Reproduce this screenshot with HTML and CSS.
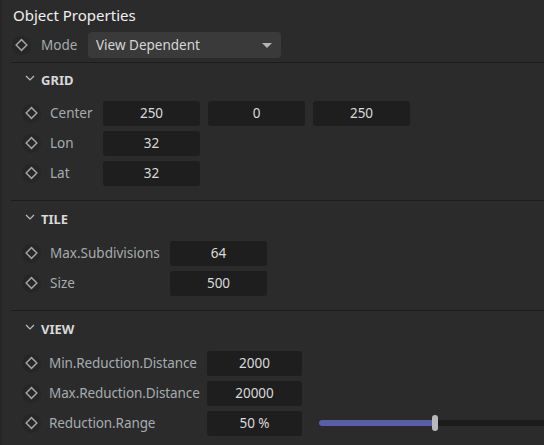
FILE: index.html
```html
<!DOCTYPE html>
<html>
<head>
<meta charset="utf-8">
<link rel="stylesheet" href="styles.css">
</head>
<body>
<div class="panel">
  <div class="title">Object Properties</div>
  <div class="mode-row">
    <span class="key"><svg viewBox="0 0 20 20" width="20" height="20"><rect x="6" y="6" width="8" height="8" transform="rotate(45 10 10)" fill="none" stroke="#a3a3a3" stroke-width="1.5"/></svg></span>
    <span class="label">Mode</span>
    <div class="dropdown"><span>View Dependent</span><svg class="caret" viewBox="0 0 10 6" width="10" height="6"><path d="M0 0 L10 0 L5 5 Z" fill="#b4b4b4"/></svg></div>
  </div>

  <section class="section first grid-sec">
    <div class="section-head"><svg class="chev" viewBox="0 0 10 6" width="10" height="6"><path d="M1 1 L5 5 L9 1" fill="none" stroke="#bcbcbc" stroke-width="1.2"/></svg><span>GRID</span></div>
    <div class="rows">
      <span class="key"><svg viewBox="0 0 20 20" width="20" height="20"><rect x="6" y="6" width="8" height="8" transform="rotate(45 10 10)" fill="none" stroke="#a3a3a3" stroke-width="1.5"/></svg></span>
      <span class="label">Center</span>
      <div class="values"><div class="field">250</div><div class="field">0</div><div class="field">250</div></div>

      <span class="key"><svg viewBox="0 0 20 20" width="20" height="20"><rect x="6" y="6" width="8" height="8" transform="rotate(45 10 10)" fill="none" stroke="#a3a3a3" stroke-width="1.5"/></svg></span>
      <span class="label">Lon</span>
      <div class="values"><div class="field">32</div></div>

      <span class="key"><svg viewBox="0 0 20 20" width="20" height="20"><rect x="6" y="6" width="8" height="8" transform="rotate(45 10 10)" fill="none" stroke="#a3a3a3" stroke-width="1.5"/></svg></span>
      <span class="label">Lat</span>
      <div class="values"><div class="field">32</div></div>
    </div>
  </section>

  <section class="section tile-sec">
    <div class="section-head"><svg class="chev" viewBox="0 0 10 6" width="10" height="6"><path d="M1 1 L5 5 L9 1" fill="none" stroke="#bcbcbc" stroke-width="1.2"/></svg><span>TILE</span></div>
    <div class="rows">
      <span class="key"><svg viewBox="0 0 20 20" width="20" height="20"><rect x="6" y="6" width="8" height="8" transform="rotate(45 10 10)" fill="none" stroke="#a3a3a3" stroke-width="1.5"/></svg></span>
      <span class="label">Max.Subdivisions</span>
      <div class="values"><div class="field">64</div></div>

      <span class="key"><svg viewBox="0 0 20 20" width="20" height="20"><rect x="6" y="6" width="8" height="8" transform="rotate(45 10 10)" fill="none" stroke="#a3a3a3" stroke-width="1.5"/></svg></span>
      <span class="label">Size</span>
      <div class="values"><div class="field">500</div></div>
    </div>
  </section>

  <section class="section last view-sec">
    <div class="section-head"><svg class="chev" viewBox="0 0 10 6" width="10" height="6"><path d="M1 1 L5 5 L9 1" fill="none" stroke="#bcbcbc" stroke-width="1.2"/></svg><span>VIEW</span></div>
    <div class="rows">
      <span class="key"><svg viewBox="0 0 20 20" width="20" height="20"><rect x="6" y="6" width="8" height="8" transform="rotate(45 10 10)" fill="none" stroke="#a3a3a3" stroke-width="1.5"/></svg></span>
      <span class="label">Min.Reduction.Distance</span>
      <div class="values"><div class="field narrow">2000</div></div>

      <span class="key"><svg viewBox="0 0 20 20" width="20" height="20"><rect x="6" y="6" width="8" height="8" transform="rotate(45 10 10)" fill="none" stroke="#a3a3a3" stroke-width="1.5"/></svg></span>
      <span class="label">Max.Reduction.Distance</span>
      <div class="values"><div class="field narrow">20000</div></div>

      <span class="key"><svg viewBox="0 0 20 20" width="20" height="20"><rect x="6" y="6" width="8" height="8" transform="rotate(45 10 10)" fill="none" stroke="#a3a3a3" stroke-width="1.5"/></svg></span>
      <span class="label">Reduction.Range</span>
      <div class="values">
        <div class="field narrow">50 %</div>
        <div class="slider">
          <div class="track"><div class="fill" style="width: 116px"></div></div>
          <div class="knob"></div>
        </div>
      </div>
    </div>
  </section>
</div>
</body>
</html>
```

FILE: styles.css
```css
* { box-sizing: border-box; }
html, body { margin: 0; padding: 0; }
body {
  width: 544px;
  height: 445px;
  overflow: hidden;
  background: #2b2b2b;
  font-family: "Noto Sans", "Open Sans", sans-serif;
  font-size: 13.5px;
  color: #a7abb0;
}
.panel {
  height: 445px;
  border-left: 2px solid #262626;
  padding-left: 9px;
}
.title {
  height: 32px;
  padding: 4px 0 0 2px;
  font-size: 15px;
  line-height: 22px;
  color: #f0f0f0;
}
.mode-row {
  display: flex;
  align-items: center;
  height: 26px;
  margin-bottom: 4px;
}
.key {
  width: 19px;
  height: 19px;
  border-radius: 50%;
  background: #262626;
  display: flex;
  align-items: center;
  justify-content: center;
}
.mode-row .key { margin-left: 1px; }
.key svg { display: block; }
.label {
  white-space: nowrap;
  line-height: 20px;
}
.mode-row .label { margin-left: 10px; width: 47px; }
.dropdown {
  width: 193px;
  height: 26px;
  background: #3a3a3a;
  border-radius: 4px;
  display: flex;
  align-items: center;
  justify-content: space-between;
  padding: 0 9px 0 8px;
  color: #d6d6d6;
}
.caret { display: block; margin-top: 2px; }
.section {
  border-top: 1px solid #1c1c1c;
  padding-bottom: 12px;
}
.section-head {
  height: 37px;
  display: flex;
  align-items: center;
  padding-left: 14px;
  padding-bottom: 2px;
  font-weight: bold;
  font-size: 13px;
  color: #d8d8d8;
}
.section.first .section-head { height: 35px; }
.chev { display: block; margin-right: 6px; margin-top: -3px; }
.rows {
  display: grid;
  grid-template-columns: 19px var(--label-w) 1fr;
  grid-auto-rows: 30px;
  align-items: center;
  column-gap: 0;
  padding-left: 11px;
}
.grid-sec { --label-w: 62px; }
.tile-sec { --label-w: 129px; }
.view-sec { --label-w: 166px; }
.rows .label { padding-left: 9px; }
.view-sec .rows .label { padding-left: 8px; letter-spacing: -0.1px; }
.values {
  display: flex;
  align-items: center;
  gap: 8px;
}
.field {
  width: 97px;
  height: 25px;
  background: #1e1e1e;
  border-radius: 3px;
  display: flex;
  align-items: center;
  justify-content: center;
  color: #dadada;
}
.field.narrow { width: 95px; }
.section.last { padding-bottom: 4px; }
.slider {
  flex: 1;
  position: relative;
  height: 16px;
  margin-left: 9px;
  margin-right: -1px;
}
.track {
  position: absolute;
  left: 0; right: 0; top: 5px;
  height: 6px;
  background: #1c1c1c;
  border-radius: 3px 0 0 3px;
}
.fill {
  height: 6px;
  background: #5a5ea8;
  border-radius: 3px 0 0 3px;
}
.knob {
  position: absolute;
  left: 113px;
  top: 0;
  width: 6px;
  height: 16px;
  border-radius: 3px;
  background: #b9b9b9;
}
```
